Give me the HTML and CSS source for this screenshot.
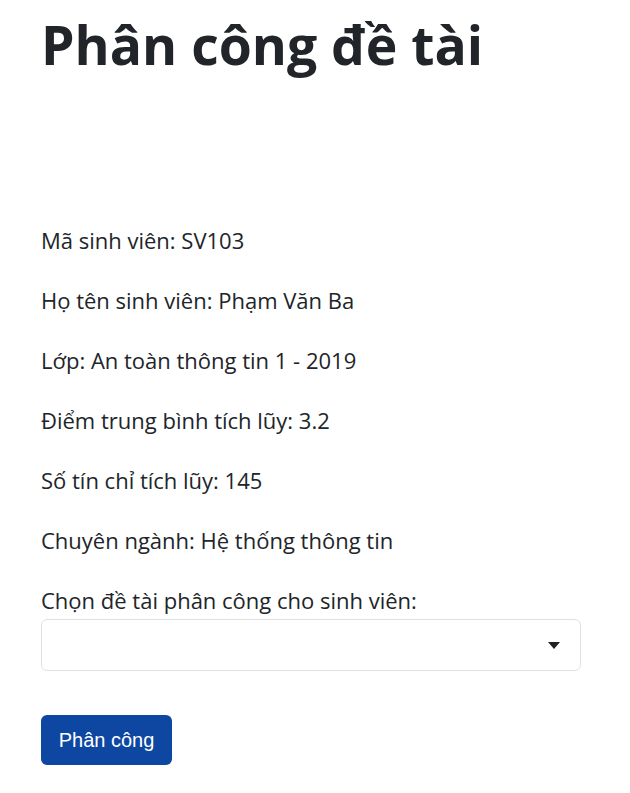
FILE: index.html
```html
<!DOCTYPE html>
<html lang="vi">
<head>
<meta charset="utf-8">
<link rel="stylesheet" href="styles.css">
</head>
<body>
<main class="page">
  <h1 class="title">Phân công đề tài</h1>
  <section class="info">
    <p class="row">Mã sinh viên: SV103</p>
    <p class="row">Họ tên sinh viên: Phạm Văn Ba</p>
    <p class="row">Lớp: An toàn thông tin 1 - 2019</p>
    <p class="row">Điểm trung bình tích lũy: 3.2</p>
    <p class="row">Số tín chỉ tích lũy: 145</p>
    <p class="row">Chuyên ngành: Hệ thống thông tin</p>
  </section>
  <form class="assign">
    <label class="label" for="topic">Chọn đề tài phân công cho sinh viên:</label>
    <div class="select">
      <span class="select-value"></span>
      <svg class="caret" width="12" height="7" viewBox="0 0 12 7"><path d="M0 0h12L6 7z" fill="#222"/></svg>
    </div>
    <button type="button" class="btn">Phân công</button>
  </form>
</main>
</body>
</html>
```

FILE: styles.css
```css
* { box-sizing: border-box; }
html, body { margin: 0; padding: 0; background: #fff; }
body {
  font-family: "Open Sans", "Noto Sans", sans-serif;
  color: #212529;
}
.page {
  width: 540px;
  margin-left: 41px;
  padding-top: 13px;
}
.title {
  margin: 0;
  font-size: 53.5px;
  font-weight: 700;
  line-height: 1.2;
  color: #212529;
}
.info {
  margin-top: 148px;
  display: flex;
  flex-direction: column;
  gap: 30px;
}
.row {
  margin: 0;
  font-size: 22px;
  line-height: 30px;
}
.assign {
  margin-top: 30px;
  display: flex;
  flex-direction: column;
  align-items: flex-start;
}
.label {
  font-size: 22px;
  line-height: 30px;
  margin-bottom: 4px;
}
.select {
  width: 540px;
  height: 52px;
  border: 1px solid #dee2e6;
  border-radius: 6px;
  display: flex;
  align-items: center;
  justify-content: flex-end;
  padding-right: 20px;
}
.btn {
  margin-top: 44px;
  background: #0d47a1;
  color: #fff;
  border: none;
  border-radius: 6px;
  height: 50px;
  width: 131px;
  font-family: "Liberation Sans", Arial, sans-serif;
  font-size: 20px;
  padding: 0;
}
```
